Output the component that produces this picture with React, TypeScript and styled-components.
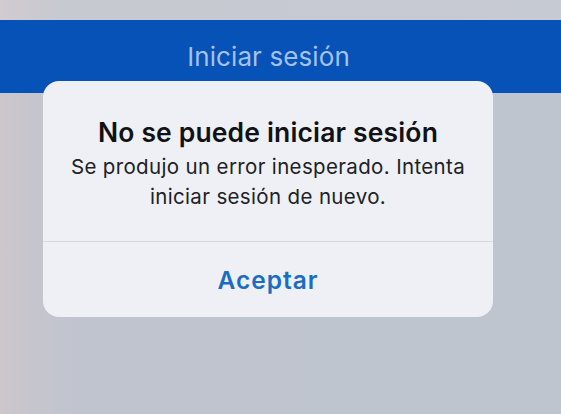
import React from "react";
import styled, { createGlobalStyle } from "styled-components";

const Global = createGlobalStyle`
  html, body { margin: 0; padding: 0; }
  body {
    width: 561px;
    height: 414px;
    overflow: hidden;
    font-family: Inter, "Noto Sans", "Liberation Sans", sans-serif;
  }
`;

const Screen = styled.div`
  position: relative;
  width: 561px;
  height: 414px;
  display: flex;
  flex-direction: column;
  background: linear-gradient(90deg, #cdc6cc 0px, #c6c5cd 30px, #bfc4ce 90px, #bfc5cf 100%);
`;

const StatusStrip = styled.div`
  height: 20px;
  background: linear-gradient(90deg, #d2cbd0 0px, #c7c9d1 60px, #c6cad2 100%);
`;

const NavBar = styled.header`
  height: 73px;
  background: #0752b7;
  display: flex;
  align-items: center;
  justify-content: center;
  padding-right: 24px;
  box-sizing: border-box;
`;

const NavTitle = styled.h1`
  margin: 0;
  font-size: 26px;
  font-weight: 400;
  color: #a3c1ea;
  letter-spacing: 0.1px;
`;

const Alert = styled.div`
  position: absolute;
  left: 43px;
  top: 81px;
  width: 450px;
  height: 236px;
  border-radius: 16px;
  background: #eef0f6;
  display: flex;
  flex-direction: column;
  overflow: hidden;
`;

const AlertBody = styled.div`
  height: 161px;
  display: flex;
  flex-direction: column;
  align-items: center;
  padding-top: 37px;
  box-sizing: border-box;
  border-bottom: 1px solid #d6d8dd;
`;

const AlertTitle = styled.h2`
  margin: 0;
  font-size: 26.5px;
  font-weight: 600;
  color: #111214;
  line-height: 28px;
  letter-spacing: 0.15px;
`;

const AlertMessage = styled.p`
  margin: 6px 0 0;
  font-size: 20.5px;
  font-weight: 400;
  color: #202124;
  line-height: 30px;
  text-align: center;
  letter-spacing: 0.35px;
  width: 440px;
`;

const AlertButton = styled.button`
  flex: 1;
  border: none;
  background: transparent;
  font-family: inherit;
  font-size: 24.5px;
  font-weight: 600;
  letter-spacing: 1px;
  color: #1b6dc1;
  padding: 0 0 0;
`;

export default function App() {
  return (
    <>
      <Global />
      <Screen>
        <StatusStrip />
        <NavBar>
          <NavTitle>Iniciar sesión</NavTitle>
        </NavBar>
        <Alert>
          <AlertBody>
            <AlertTitle>No se puede iniciar sesión</AlertTitle>
            <AlertMessage>
              Se produjo un error inesperado. Intenta
              <br />
              iniciar sesión de nuevo.
            </AlertMessage>
          </AlertBody>
          <AlertButton>Aceptar</AlertButton>
        </Alert>
      </Screen>
    </>
  );
}
